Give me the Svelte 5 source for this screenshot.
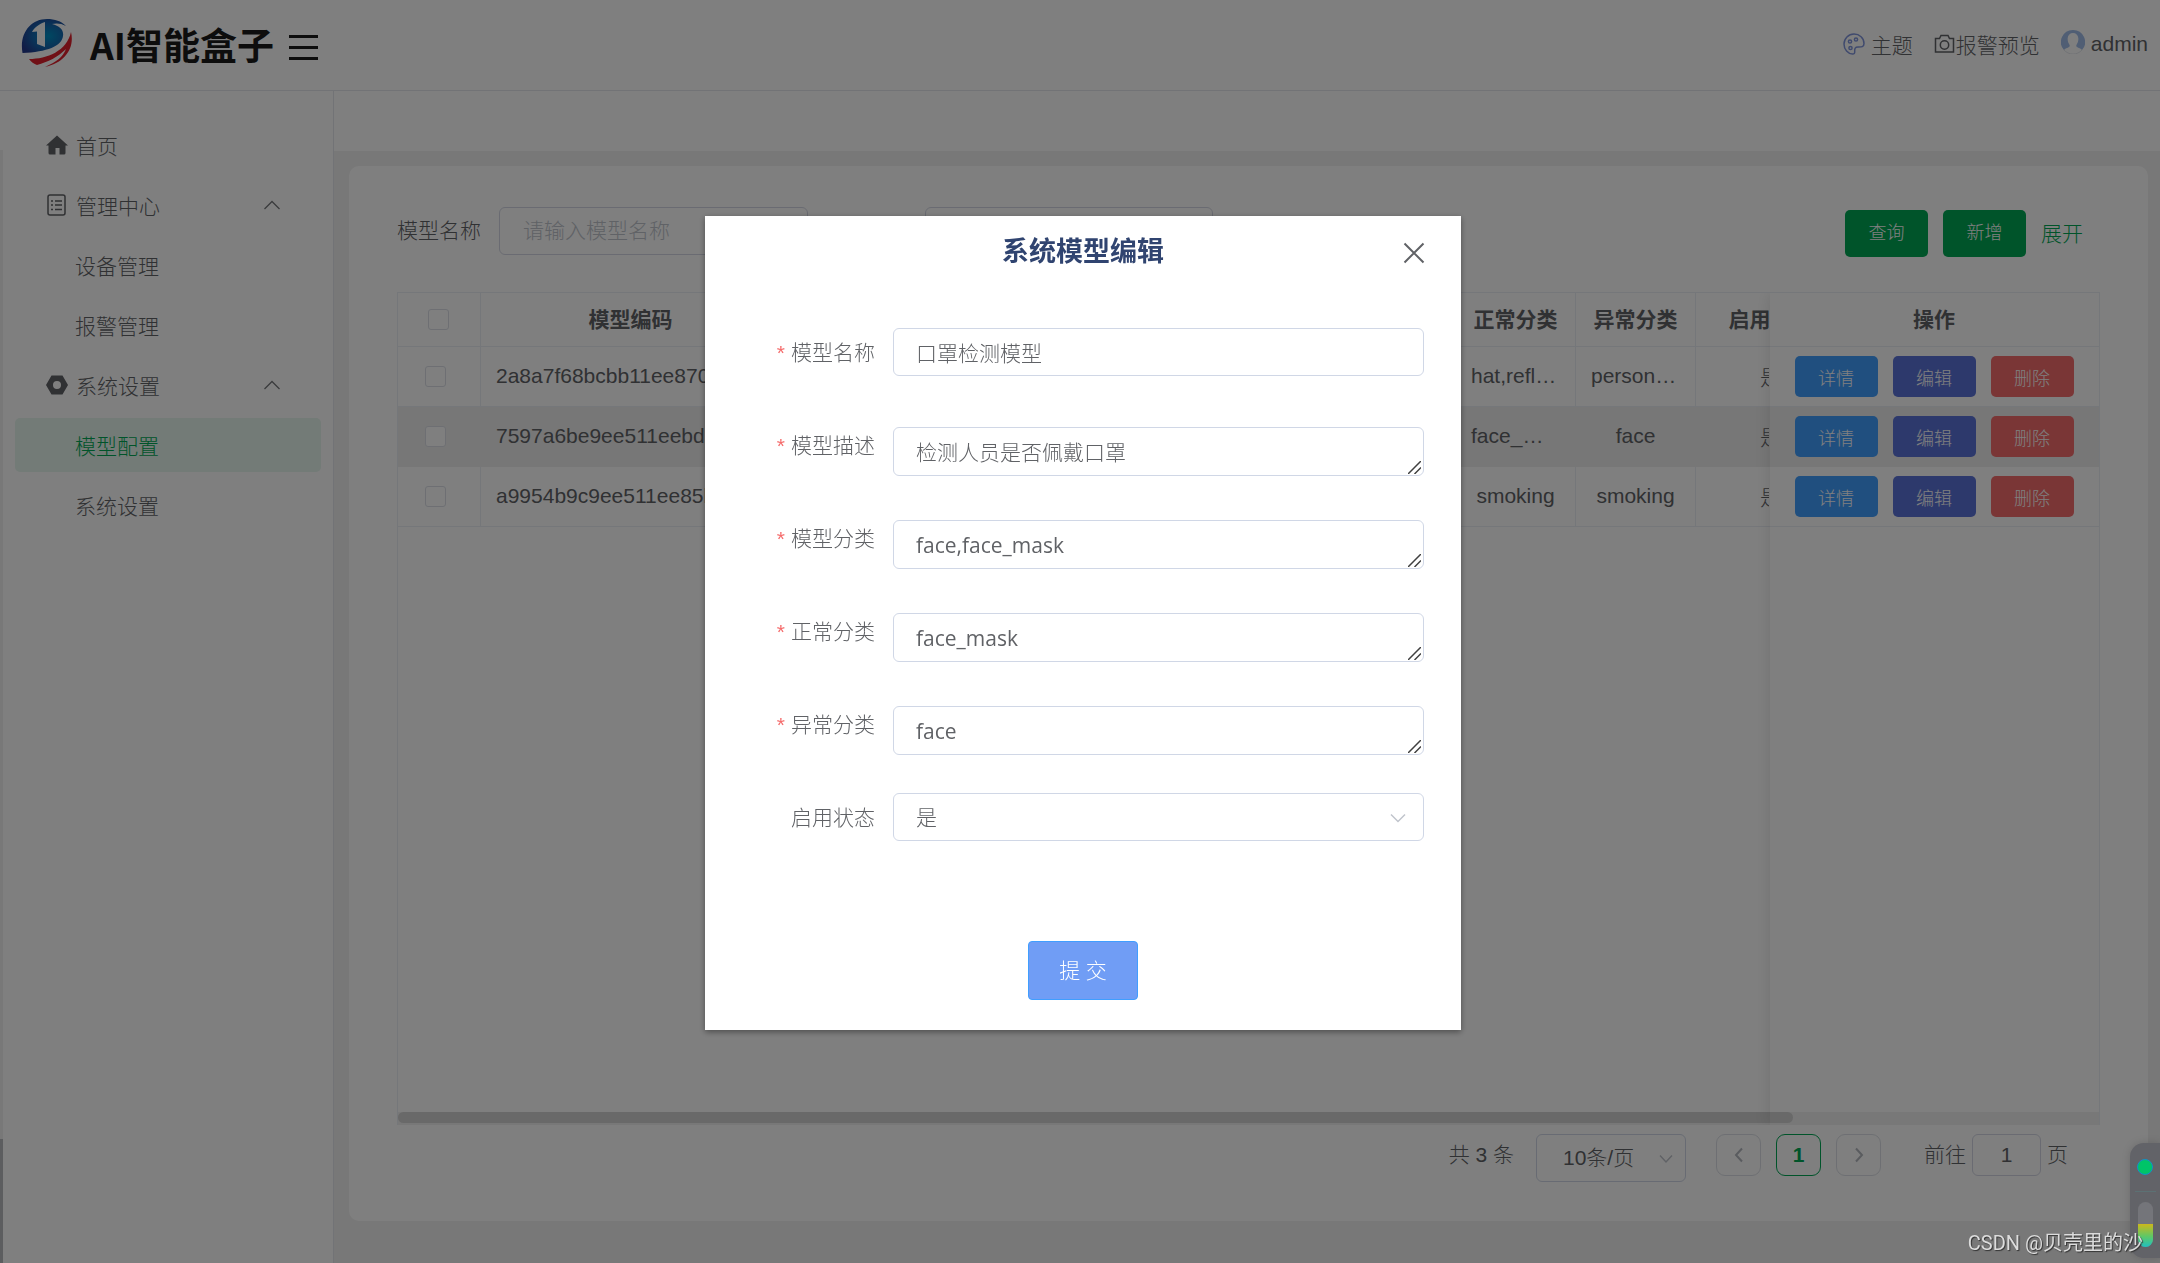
<script lang="ts">
	const menu = [
		{ label: '首页', icon: 'home' },
		{ label: '管理中心', icon: 'list', open: true },
		{ label: '设备管理', sub: true },
		{ label: '报警管理', sub: true },
		{ label: '系统设置', icon: 'nut', open: true },
		{ label: '模型配置', sub: true, active: true },
		{ label: '系统设置', sub: true }
	];

	const rows = [
		{ code: '2a8a7f68bcbb11ee870', normal: 'hat,reflect', abnormal: 'person,hat', enabled: '是' },
		{ code: '7597a6be9ee511eebd', normal: 'face_mask', abnormal: 'face', enabled: '是' },
		{ code: 'a9954b9c9ee511ee85b', normal: 'smoking', abnormal: 'smoking', enabled: '是' }
	];

	const hovered = 1;

	let form = $state({
		name: '口罩检测模型',
		desc: '检测人员是否佩戴口罩',
		classes: 'face,face_mask',
		normal: 'face_mask',
		abnormal: 'face',
		enabled: '是'
	});
</script>

{#snippet grip()}
	<svg class="grip" viewBox="0 0 13 13" stroke="#404040" stroke-width="1.5" aria-hidden="true">
		<path d="M0 13 13 0M6.500 13 13 6.500" />
	</svg>
{/snippet}

<div class="app">
	<header class="topbar">
		<svg class="logo" viewBox="0 0 52 50" aria-hidden="true">
			<defs>
				<radialGradient id="globe" cx="0.6" cy="0.5" r="0.65">
					<stop offset="0" stop-color="#0090c4" />
					<stop offset="0.55" stop-color="#1565ae" />
					<stop offset="1" stop-color="#23388c" />
				</radialGradient>
			</defs>
			<path d="M1.500 34C-2 14 10 0 26 0c8 0 14 2 19 7-5-3-10-3-14-2 8 2 12 6 11 12-1 10-16 16-40.500 17z" fill="url(#globe)" />
			<path d="M24 3v25l-8-3V12.500l-5 .5c2-4 7-8 13-10z" fill="#fff" />
			<path d="M50 13c4 17-7 31-26 35 11-5 18-10 21-18-8 8-18 13-29 16-3-1-6-3-8-6 18 0 38-8 42-27z" fill="#e0202c" />
		</svg>
		<h1>AI智能盒子</h1>
		<button class="burger" type="button" aria-label="折叠菜单">
			<span></span><span></span><span></span>
		</button>
		<nav class="tools">
			<a href="#theme" class="tool">
				<svg width="22" height="22" viewBox="0 0 22 22" fill="none" stroke="#8095dc" stroke-width="1.5" aria-hidden="true">
					<path d="M11 1C5.500 1 1 5.500 1 11s4 10 8.500 10c2 0 2.300-1 2.200-2.500-.2-3 .5-4.500 3.300-4.500 3 0 6 .3 6-3.500C21 5 16.500 1 11 1z" />
					<circle cx="7" cy="8.500" r="1.600" />
					<circle cx="13" cy="6.500" r="1.600" />
					<circle cx="7.500" cy="15" r="1.600" />
				</svg>
				主题
			</a>
			<a href="#preview" class="tool tool--tight">
				<svg width="21" height="20" viewBox="0 0 21 20" fill="none" stroke="#606266" stroke-width="1.500" aria-hidden="true">
					<path d="M1.500 4.500h4l1.500-3h7l1.500 3h4v13.500h-18z" />
					<circle cx="10.500" cy="11" r="4.200" />
				</svg>
				报警预览
			</a>
			<a href="#user" class="tool">
				<svg class="avatar" width="24" height="24" viewBox="0 0 24 24" aria-hidden="true">
					<path d="M12 0a12 12 0 0 0-9 20c1-1.500 3.500-2 5-3 .8-.5 1-1.500.3-2.500C6.800 12.500 6.500 10 6.700 8 7 5 9 3 12 3s5 2 5.300 5c.2 2-.1 4.500-1.600 6.500-.7 1-.5 2 .3 2.500 1.500 1 4 1.500 5 3A12 12 0 0 0 12 0z" fill="#a0bce8" />
					<path d="M3 20a12 12 0 0 0 18 0" fill="none" stroke="#e4e7ed" />
				</svg>
				admin
			</a>
		</nav>
	</header>

	<div class="body">
		<aside>
			<ul>
				{#each menu as item}
					<li>
						<a href="#menu" class="item" class:item--sub={item.sub} class:item--active={item.active}>
							{#if item.icon}
								<svg class="item__icon" viewBox="0 0 22 22" aria-hidden="true">
									{#if item.icon === 'home'}
										<path d="M11 1.500 22 11.500h-2.500V19a1.500 1.500 0 0 1-1.500 1.500h-4.500V14h-4v6.500H4A1.500 1.500 0 0 1 2.500 19v-7.500H0z" fill="#606266" />
									{:else if item.icon === 'list'}
										<rect x="2" y="1" width="17" height="20" rx="2" fill="none" stroke="#606266" stroke-width="1.500" />
										<path d="M5 7h2M5 11h2M5 15.500h2M9 7h7M9 11h7M9 15.500h7" stroke="#606266" stroke-width="1.500" />
									{:else}
										<path fill-rule="evenodd" d="M5.500 1.500h11L22 11l-5.500 9.500h-11L0 11zM11 7a4 4 0 1 0 0 8 4 4 0 0 0 0-8z" fill="#606266" />
									{/if}
								</svg>
							{/if}
							<span>{item.label}</span>
							{#if item.open}
								<svg class="item__arrow" viewBox="0 0 18 10" fill="none" stroke="#75777b" stroke-width="1.300" aria-hidden="true">
									<path d="M1.500 9 9 1.500 16.500 9" />
								</svg>
							{/if}
						</a>
					</li>
				{/each}
			</ul>
		</aside>

		<main>
			<div class="tabs"></div>
			<section class="card">
				<form class="search">
					<label for="q-name">模型名称</label>
					<input id="q-name" class="q-name" placeholder="请输入模型名称" />
					<input class="q-other" aria-label="查询条件" />
					<div class="search__actions">
						<button type="button" class="btn btn--green">查询</button>
						<button type="button" class="btn btn--green">新增</button>
						<a href="#expand">展开</a>
					</div>
				</form>

				<div class="grid">
					<div class="grid__view">
						<table>
							<colgroup>
								<col class="c-check" />
								<col class="c-code" />
								<col class="c-mid" />
								<col class="c-class" />
								<col class="c-class" />
								<col class="c-state" />
								<col class="c-rest" />
								<col class="c-ops" />
							</colgroup>
							<thead>
								<tr>
									<th class="check check--head"><input type="checkbox" aria-label="全选" /></th>
									<th>模型编码</th>
									<th></th>
									<th>正常分类</th>
									<th>异常分类</th>
									<th>启用状态</th>
									<th></th>
									<th class="ops">操作</th>
								</tr>
							</thead>
							<tbody>
								{#each rows as row, i}
									<tr class:hovered={i === hovered}>
										<td class="check"><input type="checkbox" aria-label={row.code} /></td>
										<td class="code">{row.code}</td>
										<td></td>
										<td>{row.normal}</td>
										<td>{row.abnormal}</td>
										<td>{row.enabled}</td>
										<td></td>
										<td class="ops">
											<div class="ops__row">
												<button type="button" class="btn btn--sm btn--blue">详情</button>
												<button type="button" class="btn btn--sm btn--indigo">编辑</button>
												<button type="button" class="btn btn--sm btn--red">删除</button>
											</div>
										</td>
									</tr>
								{/each}
							</tbody>
						</table>
					</div>
					<div class="grid__scroll"><div class="grid__thumb"></div></div>
					<div class="grid__shade"></div>
				</div>

				<div class="pager">
					<span class="total">共 3 条</span>
					<div class="select select--page">
						<select aria-label="每页条数"><option>10条/页</option></select>
						<svg viewBox="0 0 16 10" fill="none" stroke="#c0c4cc" stroke-width="1.500" aria-hidden="true"><path d="M2 1.500 8 8l6-6.500" /></svg>
					</div>
					<div class="pages">
						<button type="button" aria-label="上一页">
							<svg width="10" height="16" viewBox="0 0 10 16" fill="none" stroke="#b4b8bf" stroke-width="2" aria-hidden="true"><path d="M8 1.500 2 8l6 6.500" /></svg>
						</button>
						<button type="button" class="current">1</button>
						<button type="button" aria-label="下一页">
							<svg width="10" height="16" viewBox="0 0 10 16" fill="none" stroke="#b4b8bf" stroke-width="2" aria-hidden="true"><path d="M2 1.500 8 8l-6 6.500" /></svg>
						</button>
					</div>
					<label class="jump">前往 <input value="1" /> 页</label>
				</div>
			</section>
		</main>
	</div>
	<div class="edge"></div>
</div>

<div class="mask">
	<div class="dialog" role="dialog" aria-modal="true" aria-labelledby="dlg-title">
		<h2 id="dlg-title">系统模型编辑</h2>
		<button class="close" type="button" aria-label="关闭">
			<svg width="22" height="22" viewBox="0 0 22 22" fill="none" stroke="#606266" stroke-width="2" aria-hidden="true"><path d="m1.500 1.500 19 19M20.500 1.500l-19 19" /></svg>
		</button>
		<form class="fields">
			<div class="field">
				<label class="required" for="f-name">模型名称</label>
				<input id="f-name" bind:value={form.name} />
			</div>
			<div class="field">
				<label class="required" for="f-desc">模型描述</label>
				<textarea id="f-desc" rows="1" bind:value={form.desc}></textarea>
				{@render grip()}
			</div>
			<div class="field">
				<label class="required" for="f-classes">模型分类</label>
				<textarea id="f-classes" rows="1" bind:value={form.classes}></textarea>
				{@render grip()}
			</div>
			<div class="field">
				<label class="required" for="f-normal">正常分类</label>
				<textarea id="f-normal" rows="1" bind:value={form.normal}></textarea>
				{@render grip()}
			</div>
			<div class="field">
				<label class="required" for="f-abnormal">异常分类</label>
				<textarea id="f-abnormal" rows="1" bind:value={form.abnormal}></textarea>
				{@render grip()}
			</div>
			<div class="field">
				<label for="f-enabled">启用状态</label>
				<div class="select">
					<select id="f-enabled" bind:value={form.enabled}>
						<option>是</option>
						<option>否</option>
					</select>
					<svg viewBox="0 0 16 10" fill="none" stroke="#c0c4cc" stroke-width="1.500" aria-hidden="true"><path d="M1 1.500 8 8.500l7-7" /></svg>
				</div>
			</div>
			<button class="submit" type="button">提 交</button>
		</form>
	</div>
</div>

<div class="widget">
	<i class="widget__dot"></i>
	<i class="widget__line"></i>
	<i class="widget__meter"><i></i></i>
</div>
<p class="watermark">CSDN @贝壳里的沙</p>

<style>
	:global(body) {
		margin: 0;
		background: #fff;
	}

	.app,
	.mask,
	.watermark {
		font-family: 'Liberation Sans', 'Noto Sans CJK SC', sans-serif;
		font-size: 21px;
		font-weight: 300;
		color: #606266;
	}

	.app *,
	.mask *,
	.widget * {
		box-sizing: border-box;
	}

	input,
	textarea,
	select,
	button {
		font: inherit;
		color: inherit;
	}

	button {
		cursor: pointer;
	}

	a {
		color: inherit;
		text-decoration: none;
	}

	.app {
		display: flex;
		flex-direction: column;
		height: 100vh;
		position: relative;
		overflow: hidden;
	}

	/* Header */
	.topbar {
		display: flex;
		align-items: center;
		flex: 0 0 91px;
		box-sizing: border-box;
		padding: 0 12px 2px 21px;
		border-bottom: 1px solid #e4e7ed;
	}

	.logo {
		width: 52px;
		height: 50px;
		margin-right: 17px;
	}

	h1 {
		margin: 0 15px 0 0;
		font-size: 37px;
		line-height: 48px;
		font-family: 'Noto Sans CJK SC', sans-serif;
		color: #1a1a1a;
	}

	.burger {
		display: flex;
		flex-direction: column;
		gap: 8px;
		width: 29px;
		padding: 7px 0 0;
		border: 0;
		background: none;
	}

	.burger span {
		height: 3px;
		background: #1a1a1a;
	}

	.tools {
		display: flex;
		align-items: center;
		gap: 21px;
		margin-left: auto;
	}

	.tool {
		display: flex;
		align-items: center;
		gap: 6px;
	}

	.tool--tight {
		gap: 1px;
	}

	.avatar {
		margin-bottom: 4px;
	}

	/* Sidebar */
	.body {
		display: flex;
		flex: 1;
		min-height: 0;
	}

	aside {
		flex: 0 0 334px;
		padding: 27px 12px 0 15px;
		border-right: 1px solid #e4e7ed;
	}

	ul {
		display: flex;
		flex-direction: column;
		gap: 6px;
		margin: 0;
		padding: 0;
		list-style: none;
	}

	.item {
		display: flex;
		align-items: center;
		height: 54px;
		padding: 0 40px 0 31px;
		border-radius: 5px;
	}

	.item--sub {
		padding-left: 60px;
	}

	.item--active {
		color: #00a854;
		background: #e6f6ee;
	}

	.item__icon {
		width: 22px;
		height: 22px;
		margin-right: 8px;
	}

	.item__arrow {
		width: 18px;
		height: 10px;
		margin-left: auto;
	}

	.edge {
		position: absolute;
		left: 0;
		top: 150px;
		bottom: 0;
		width: 3px;
		background: linear-gradient(#f0f0f0 calc(100% - 124px), #b8babf 0);
	}

	/* Content */
	main {
		display: flex;
		flex-direction: column;
		flex: 1;
		min-width: 0;
		background: #f0f0f0;
	}

	.tabs {
		height: 60px;
		background: #fff;
	}

	.card {
		display: flex;
		flex-direction: column;
		flex: 1;
		min-height: 0;
		margin: 15px 12px 42px 15px;
		padding: 41px 48px 39px;
		border-radius: 10px;
		background: #fff;
	}

	.search {
		display: flex;
		align-items: flex-start;
		margin-bottom: 35px;
		line-height: 48px;
	}

	.search input {
		height: 48px;
		padding: 0 23px;
		border: 1px solid #d4d7e4;
		border-radius: 6px;
		background: #fff;
	}

	.search input::placeholder {
		color: #c0c4cc;
	}

	.q-name {
		width: 309px;
		margin: 0 117px 0 18px;
	}

	.q-other {
		width: 288px;
	}

	.search__actions {
		display: flex;
		gap: 15px;
		margin-left: auto;
		padding: 3px 17px 0 0;
		line-height: 47px;
		color: #00a854;
	}

	.btn {
		width: 83px;
		height: 47px;
		padding: 0;
		border: 0;
		border-radius: 5px;
		font-size: 18px;
		color: #fff;
	}

	.btn--sm {
		height: 41px;
	}

	.btn--green {
		background: #00a854;
	}

	.btn--blue {
		background: #409eff;
	}

	.btn--indigo {
		background: #5a73d8;
	}

	.btn--red {
		background: #f56c6c;
	}

	/* Table */
	.grid {
		display: flex;
		flex-direction: column;
		flex: 1;
		min-height: 0;
		position: relative;
		overflow: hidden;
		border: 1px solid #ebeef5;
		border-bottom: 0;
	}

	.grid__view {
		flex: 1;
		overflow: hidden;
	}

	table {
		table-layout: fixed;
		width: 2078px;
		border-collapse: separate;
		border-spacing: 0;
	}

	.c-check { width: 83px; }
	.c-code { width: 300px; }
	.c-mid { width: 675px; }
	.c-class { width: 120px; }
	.c-state { width: 150px; }
	.c-rest { width: 300px; }
	.c-ops { width: 330px; }

	th,
	td {
		height: 60px;
		padding: 0 15px 2px;
		overflow: hidden;
		border-right: 1px solid #ebeef5;
		border-bottom: 1px solid #ebeef5;
		background: #fff;
		text-align: center;
		text-overflow: ellipsis;
		white-space: nowrap;
	}

	th {
		height: 54px;
		padding-bottom: 4px;
	}

	.code {
		text-align: left;
	}

	.hovered td {
		border-color: #eee;
		background: #eee;
	}

	.check {
		padding: 0 22px 0 15px;
	}

	.check--head {
		padding: 0 16px 0 15px;
	}

	.check input {
		display: block;
		appearance: none;
		width: 21px;
		height: 21px;
		margin: 0 auto;
		border: 1px solid #dcdfe6;
		border-radius: 3px;
		background: #fff;
	}

	.ops {
		position: sticky;
		right: 0;
		border-right: 0;
	}

	td.ops {
		padding-bottom: 0;
	}

	.ops__row {
		display: flex;
		justify-content: center;
		gap: 15px;
	}

	.grid__scroll {
		height: 13px;
		background: #f0f0f0;
	}

	.grid__thumb {
		width: 82%;
		height: 11px;
		border-radius: 6px;
		background: #d2d2d2;
	}

	.grid__shade {
		position: absolute;
		top: 0;
		right: 0;
		bottom: 0;
		width: 329px;
		box-shadow: 0 0 15px rgba(0, 0, 0, 0.12);
		pointer-events: none;
	}

	/* Pagination */
	.pager {
		display: flex;
		align-items: flex-start;
		justify-content: flex-end;
		margin-top: 9px;
		padding-right: 32px;
		line-height: 42px;
	}

	.select {
		position: relative;
	}

	.select select {
		appearance: none;
		width: 100%;
		height: 48px;
		padding: 0 22px;
		border: 1px solid #d0d7e6;
		border-radius: 6px;
		background: #fff;
	}

	.select svg {
		position: absolute;
		top: 20px;
		right: 18px;
		width: 16px;
		height: 10px;
	}

	.select--page {
		width: 150px;
		margin: 0 30px 0 22px;
	}

	.select--page select {
		padding: 0 0 0 26px;
	}

	.select--page svg {
		right: 12px;
	}

	.pages {
		display: flex;
		gap: 15px;
	}

	.pages button {
		display: flex;
		align-items: center;
		justify-content: center;
		width: 45px;
		height: 42px;
		padding: 0;
		border: 1px solid #dcdfe6;
		border-radius: 9px;
		background: #fff;
	}

	.pages .current {
		border-color: #00a854;
		font-weight: bold;
		color: #00a854;
	}

	.jump {
		display: flex;
		gap: 6px;
		margin-left: 43px;
	}

	.jump input {
		width: 69px;
		height: 42px;
		padding: 0;
		border: 1px solid #d4d7e4;
		border-radius: 6px;
		text-align: center;
	}

	/* Dialog */
	.mask {
		position: fixed;
		inset: 0;
		padding: 216px 0 0 6px;
		background: rgba(0, 0, 0, 0.5);
	}

	.dialog {
		position: relative;
		width: 756px;
		max-width: 100%;
		margin: 0 auto;
		padding: 16px 37px 30px;
		background: #fff;
		box-shadow: 0 2px 6px rgba(0, 0, 0, 0.4);
		font-family: 'Noto Sans', 'Noto Sans CJK SC', sans-serif;
		font-weight: 300;
	}

	h2 {
		margin: 0;
		font-size: 27px;
		line-height: 36px;
		font-family: 'Noto Sans CJK SC', sans-serif;
		text-align: center;
		color: #304470;
	}

	.close {
		position: absolute;
		top: 26px;
		right: 36px;
		padding: 0;
		border: 0;
		background: none;
		line-height: 0;
	}

	.fields {
		display: flex;
		flex-direction: column;
		gap: 33px;
		padding-top: 54px;
	}

	.field {
		display: flex;
		position: relative;
		height: 60px;
	}

	.field label {
		width: 133px;
		margin-right: 18px;
		line-height: 60px;
		text-align: right;
	}

	.required::before {
		content: '*';
		margin-right: 6px;
		font-family: 'Liberation Sans', sans-serif;
		color: #f56c6c;
	}

	.field input,
	.field textarea,
	.field .select {
		flex: 1;
		min-width: 0;
	}

	.field input,
	.field textarea {
		padding: 0 22px;
		border: 1px solid #d0d7e6;
		border-radius: 6px;
		background: #fff;
		font-family: 'Open Sans', 'Noto Sans CJK SC', sans-serif;
	}

	.field textarea {
		font-weight: 400;
	}

	#f-desc {
		font-weight: 300;
	}

	.field input {
		height: 48px;
		margin-top: 6px;
	}

	.field .select {
		margin-top: 6px;
	}

	.field textarea {
		height: 49px;
		margin: 12px 0 0;
		padding: 8px 22px;
		line-height: 32px;
		overflow: hidden;
		resize: none;
	}

	.grip {
		position: absolute;
		right: 3px;
		bottom: 1px;
		width: 13px;
		height: 13px;
	}

	.submit {
		align-self: center;
		width: 110px;
		height: 59px;
		margin-top: 61px;
		padding: 0 0 3px;
		border: 1px solid #409eff;
		border-radius: 4px;
		background: #709df5;
		color: #fff;
	}

	/* Desktop gadget and credit over the page */
	.widget {
		position: fixed;
		right: 0;
		bottom: 5px;
		display: flex;
		flex-direction: column;
		align-items: center;
		box-sizing: border-box;
		width: 30px;
		height: 115px;
		padding: 16px 0 10px;
		border-radius: 14px 0 0 14px;
		background: #626368;
		box-shadow: 0 0 8px rgba(0, 0, 0, 0.15);
	}

	.widget__dot {
		width: 16px;
		height: 16px;
		border: 1px solid #1490c8;
		border-radius: 50%;
		background: #00c468;
	}

	.widget__line {
		width: 21px;
		height: 1px;
		margin: 16px 0 10px;
		background: #5c7174;
	}

	.widget__meter {
		display: flex;
		align-items: flex-end;
		width: 15px;
		height: 45px;
		border-radius: 8px;
		overflow: hidden;
		background: #74757a;
	}

	.widget__meter i {
		width: 100%;
		height: 23px;
		background: linear-gradient(#ccb81c, #5cc868 55%, #20c0c0);
	}

	.watermark {
		position: fixed;
		right: 17px;
		bottom: 6px;
		margin: 0;
		font-family: Roboto, 'Noto Sans CJK SC', sans-serif;
		font-size: 20px;
		font-weight: 400;
		line-height: 28px;
		color: #dcdcdc;
		text-shadow: 1px 1px 1px #333;
	}
</style>
